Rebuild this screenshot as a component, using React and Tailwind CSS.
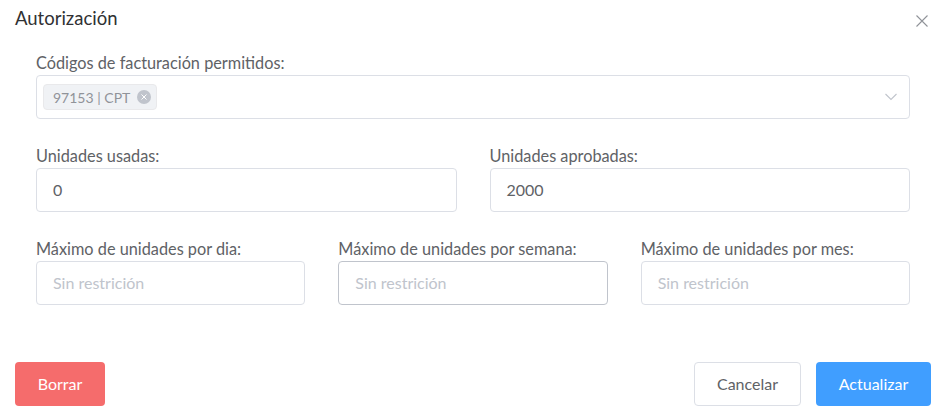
import React from "react";

const font = { fontFamily: '"Lato", "Noto Sans", sans-serif' };

function Label({ children }) {
  return (
    <div className="h-[22px] leading-[22px] text-[16.3px] text-[#606266] mb-px whitespace-nowrap">{children}</div>
  );
}

function Input({ value, placeholder, hover }) {
  return (
    <div
      className={`h-[44px] rounded-[4px] border ${hover ? "border-[#c0c4cc]" : "border-[#dcdfe6]"} bg-white flex items-center px-[16px] text-[16px]`}
    >
      {value ? (
        <span className="text-[#606266]">{value}</span>
      ) : (
        <span className="text-[#c0c4cc]">{placeholder}</span>
      )}
    </div>
  );
}

export default function App() {
  return (
    <div className="w-[944px] h-[415px] bg-white overflow-hidden" style={font}>
      <div className="h-[38px] flex items-center justify-between pl-[15px] pr-[16px]">
        <span className="text-[18.5px] text-[#303133]">Autorización</span>
        <svg width="12" height="12" viewBox="0 0 12 12" className="mt-[4px]">
          <path d="M0.5 0.5 L11.5 11.5 M11.5 0.5 L0.5 11.5" stroke="#909399" strokeWidth="1.1" fill="none" />
        </svg>
      </div>

      <div className="pl-[36px] pr-[34px] pt-[14px]">
        <Label>Códigos de facturación permitidos:</Label>
        <div className="h-[44px] rounded-[4px] border border-[#dcdfe6] flex items-center justify-between pl-[6px] pr-[12px]">
          <div className="h-[26px] flex items-center gap-[7px] rounded-[4px] bg-[#f0f2f5] border border-[#e9e9eb] pl-[9px] pr-[5px] text-[14px] text-[#909399]">
            <span>97153 | CPT</span>
            <span className="w-[14px] h-[14px] rounded-full bg-[#c0c4cc] flex items-center justify-center">
              <svg width="6" height="6" viewBox="0 0 6 6">
                <path d="M0.5 0.5 L5.5 5.5 M5.5 0.5 L0.5 5.5" stroke="#ffffff" strokeWidth="1" fill="none" />
              </svg>
            </span>
          </div>
          <svg width="12" height="8" viewBox="0 0 12 8">
            <path d="M0.5 1 L6 6.5 L11.5 1" stroke="#c0c4cc" strokeWidth="1.1" fill="none" />
          </svg>
        </div>

        <div className="grid grid-cols-2 gap-[33px] mt-[26px]">
          <div>
            <Label>Unidades usadas:</Label>
            <Input value="0" />
          </div>
          <div>
            <Label>Unidades aprobadas:</Label>
            <Input value="2000" />
          </div>
        </div>

        <div className="grid grid-cols-3 gap-[33px] mt-[26px]">
          <div>
            <Label>Máximo de unidades por dia:</Label>
            <Input placeholder="Sin restrición" />
          </div>
          <div>
            <Label>Máximo de unidades por semana:</Label>
            <Input placeholder="Sin restrición" hover />
          </div>
          <div>
            <Label>Máximo de unidades por mes:</Label>
            <Input placeholder="Sin restrición" />
          </div>
        </div>
      </div>

      <div className="mt-[57px] pl-[15px] pr-[13px] flex items-center justify-between">
        <button className="w-[90px] h-[44px] rounded-[4px] bg-[#f56c6c] text-white text-[16px]">Borrar</button>
        <div className="flex gap-[15px]">
          <button className="w-[107px] h-[44px] rounded-[4px] border border-[#dcdfe6] bg-white text-[#606266] text-[16px]">Cancelar</button>
          <button className="w-[115px] h-[44px] rounded-[4px] bg-[#409eff] text-white text-[16px]">Actualizar</button>
        </div>
      </div>
    </div>
  );
}
